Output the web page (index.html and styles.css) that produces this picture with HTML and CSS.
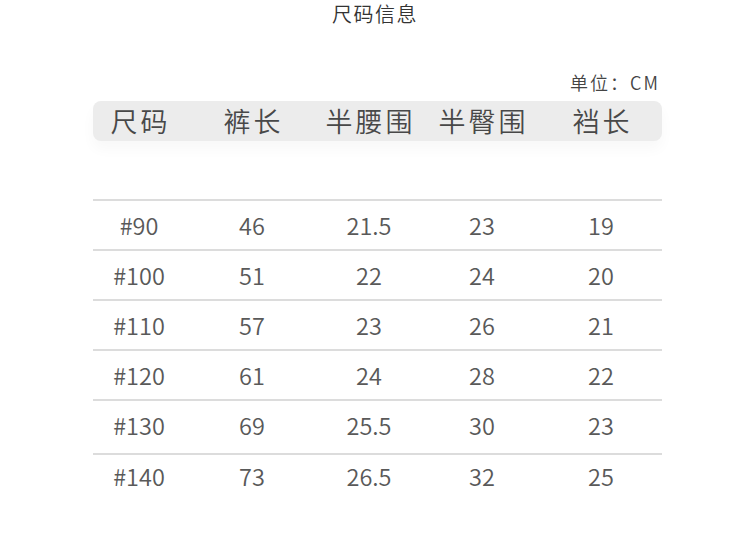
FILE: index.html
```html
<!DOCTYPE html>
<html lang="zh-CN">
<head>
<meta charset="utf-8">
<title>尺码信息</title>
<link rel="stylesheet" href="styles.css">
</head>
<body>
<h1 class="title">尺码信息</h1>
<div class="chart">
  <div class="unit">单位：CM</div>
  <div class="head row-grid">
    <span>尺码</span><span>裤长</span><span>半腰围</span><span>半臀围</span><span>裆长</span>
  </div>
  <div class="spacer"></div>
  <div class="row row-grid"><span>#90</span><span>46</span><span>21.5</span><span>23</span><span>19</span></div>
  <div class="row row-grid"><span>#100</span><span>51</span><span>22</span><span>24</span><span>20</span></div>
  <div class="row row-grid"><span>#110</span><span>57</span><span>23</span><span>26</span><span>21</span></div>
  <div class="row row-grid"><span>#120</span><span>61</span><span>24</span><span>28</span><span>22</span></div>
  <div class="row row-grid row-tall"><span>#130</span><span>69</span><span>25.5</span><span>30</span><span>23</span></div>
  <div class="row row-grid row-last"><span>#140</span><span>73</span><span>26.5</span><span>32</span><span>25</span></div>
</div>
</body>
</html>
```

FILE: styles.css
```css
html, body {
  margin: 0;
  padding: 0;
  background: #ffffff;
}

body {
  font-family: "Noto Sans CJK SC", "Noto Sans", sans-serif;
  color: #555555;
}

.title {
  margin: 0;
  height: 28px;
  line-height: 28px;
  font-size: 20px;
  font-weight: 350;
  letter-spacing: 1.5px;
  text-align: center;
  color: #333333;
}

.chart {
  width: 569px;
  margin: 43px 0 0 93px;
}

.unit {
  height: 24px;
  line-height: 22px;
  font-size: 18px;
  font-weight: 350;
  letter-spacing: 2px;
  text-align: right;
  padding-right: 2px;
  color: #444444;
}

.row-grid {
  display: grid;
  grid-template-columns: 92px 134px 100px 126px 112px;
  justify-items: center;
}

.head {
  margin-top: 6px;
  height: 40px;
  line-height: 40px;
  background: #ececec;
  border-radius: 8px;
  font-size: 27px;
  font-weight: 350;
  letter-spacing: 3px;
  color: #484848;
  box-shadow: 0 8px 14px rgba(0, 0, 0, 0.03);
}

.head span {
  padding-left: 3px;
}

.spacer {
  height: 58px;
}

.row {
  border-top: 2px solid #dcdcdc;
  padding-top: 2px;
  height: 46px;
  line-height: 44px;
  font-size: 23.5px;
  font-weight: 350;
  color: #595959;
}

.row-tall {
  height: 50px;
}

.row-last {
  padding-top: 0;
  line-height: 42px;
  height: 42px;
}
```
